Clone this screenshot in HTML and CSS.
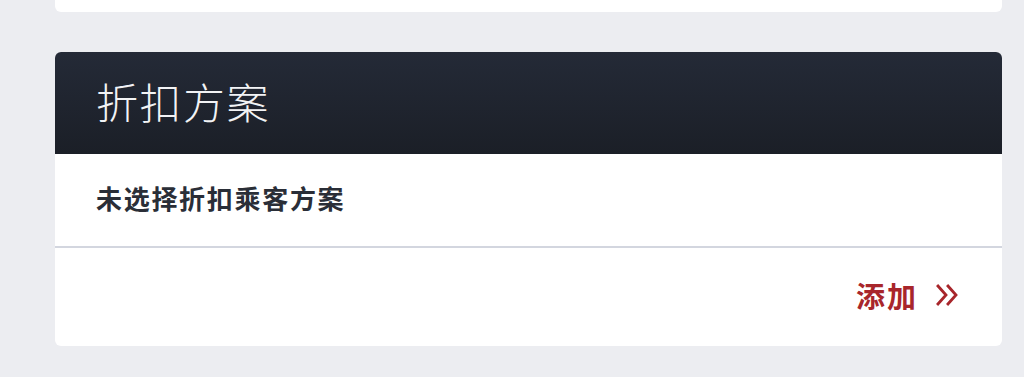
FILE: index.html
```html
<!DOCTYPE html>
<html lang="zh-CN">

<head>
    <meta charset="UTF-8">
    <meta name="viewport" content="width=device-width, initial-scale=1.0">
    <title>折扣方案</title>
    <link rel="stylesheet" href="styles.css">
</head>

<body>

    <div class="page">
        <div class="card card-prev"></div>

        <div class="card">
            <div class="card-header">
                <h2 class="card-title">折扣方案</h2>
            </div>
            <div class="card-row">
                <span class="row-text">未选择折扣乘客方案</span>
            </div>
            <div class="card-footer">
                <a class="add-link" href="#">
                    <span class="add-text">添加</span>
                    <svg class="chevrons" width="24" height="22" viewBox="0 0 24 22" fill="none" stroke="currentColor" stroke-width="2.8" stroke-linecap="square">
                        <path d="M3 2 L11 11 L3 20" />
                        <path d="M13 2 L21 11 L13 20" />
                    </svg>
                </a>
            </div>
        </div>
    </div>

</body>

</html>
```

FILE: styles.css
```css
body {
    margin: 0;
    background-color: #ecedf1;
    font-family: "Noto Sans CJK SC", "Noto Sans", Arial, sans-serif;
}

.page {
    display: flex;
    flex-direction: column;
    gap: 40px;
    padding: 0 22px 0 55px;
}

.card {
    background-color: #fff;
    border-radius: 6px;
    overflow: hidden;
}

/* the card above, scrolled mostly out of view */
.card-prev {
    height: 12px;
    border-radius: 0 0 6px 6px;
}

.card-header {
    height: 102px;
    display: flex;
    align-items: center;
    padding: 0 41px 6px;
    box-sizing: border-box;
    background: linear-gradient(180deg, #242a37, #1b1f27);
}

.card-title {
    margin: 0;
    color: #f2f3f5;
    font-size: 42px;
    font-weight: 200;
    letter-spacing: 1.5px;
}

.card-row {
    height: 94px;
    display: flex;
    align-items: center;
    padding: 0 41px 6px;
    box-sizing: border-box;
    border-bottom: 2px solid #d3d6df;
}

.row-text {
    color: #2a2e37;
    font-size: 26px;
    font-weight: 700;
    letter-spacing: 1.7px;
}

.card-footer {
    height: 98px;
    display: flex;
    align-items: center;
    justify-content: flex-end;
    padding: 0 43px 4px;
    box-sizing: border-box;
}

.add-link {
    display: flex;
    align-items: center;
    gap: 17px;
    color: #a8262b;
    text-decoration: none;
}

.add-text {
    font-size: 29px;
    font-weight: 700;
    letter-spacing: 2px;
}

.chevrons {
    display: block;
}
```
